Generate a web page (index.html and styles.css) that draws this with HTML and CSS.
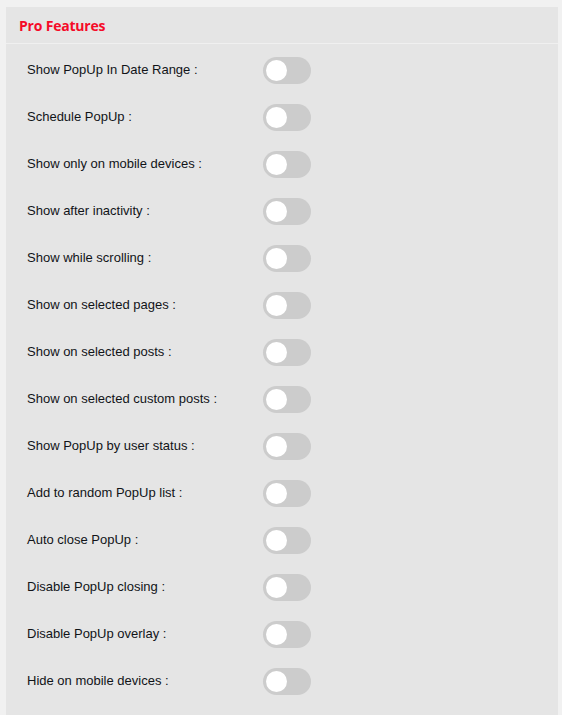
FILE: index.html
```html
<!DOCTYPE html>
<html>
<head>
<meta charset="utf-8">
<link rel="stylesheet" href="styles.css">
</head>
<body>
<div class="panel">
  <div class="panel-head"><h2 class="title">Pro Features</h2></div>
  <div class="panel-body">
    <div class="row"><span class="label">Show PopUp In Date Range :</span><span class="toggle"><span class="knob"></span></span></div>
    <div class="row"><span class="label">Schedule PopUp :</span><span class="toggle"><span class="knob"></span></span></div>
    <div class="row"><span class="label">Show only on mobile devices :</span><span class="toggle"><span class="knob"></span></span></div>
    <div class="row"><span class="label">Show after inactivity :</span><span class="toggle"><span class="knob"></span></span></div>
    <div class="row"><span class="label">Show while scrolling :</span><span class="toggle"><span class="knob"></span></span></div>
    <div class="row"><span class="label">Show on selected pages :</span><span class="toggle"><span class="knob"></span></span></div>
    <div class="row"><span class="label">Show on selected posts :</span><span class="toggle"><span class="knob"></span></span></div>
    <div class="row"><span class="label">Show on selected custom posts :</span><span class="toggle"><span class="knob"></span></span></div>
    <div class="row"><span class="label">Show PopUp by user status :</span><span class="toggle"><span class="knob"></span></span></div>
    <div class="row"><span class="label">Add to random PopUp list :</span><span class="toggle"><span class="knob"></span></span></div>
    <div class="row"><span class="label">Auto close PopUp :</span><span class="toggle"><span class="knob"></span></span></div>
    <div class="row"><span class="label">Disable PopUp closing :</span><span class="toggle"><span class="knob"></span></span></div>
    <div class="row"><span class="label">Disable PopUp overlay :</span><span class="toggle"><span class="knob"></span></span></div>
    <div class="row"><span class="label">Hide on mobile devices :</span><span class="toggle"><span class="knob"></span></span></div>
  </div>
</div>
</body>
</html>
```

FILE: styles.css
```css
html, body {
  margin: 0;
  padding: 0;
  background: #f1f1f1;
  height: 100%;
  overflow: hidden;
}
.panel {
  margin: 7px 4px 0 6px;
  background: #e5e5e5;
  min-height: 720px;
}
.panel-head {
  height: 36px;
  border-bottom: 1px solid #f0f0f0;
  display: flex;
  align-items: center;
  padding-left: 13px;
}
.title {
  margin: 0;
  font-family: "Open Sans", sans-serif;
  font-weight: 700;
  font-size: 14px;
  color: #f50a28;
  letter-spacing: -0.2px;
}
.panel-body {
  padding: 3px 0 0 21px;
}
.row {
  height: 47px;
  display: flex;
  align-items: center;
}
.label {
  width: 236px;
  padding-bottom: 2px;
  font-family: "Liberation Sans", Arial, sans-serif;
  font-size: 13px;
  color: #111418;
}
.toggle {
  width: 48px;
  height: 27px;
  border-radius: 14px;
  background: #cccccc;
  display: flex;
  align-items: center;
  box-sizing: border-box;
  padding-left: 3px;
}
.knob {
  width: 21px;
  height: 21px;
  border-radius: 50%;
  background: #ffffff;
}
```
